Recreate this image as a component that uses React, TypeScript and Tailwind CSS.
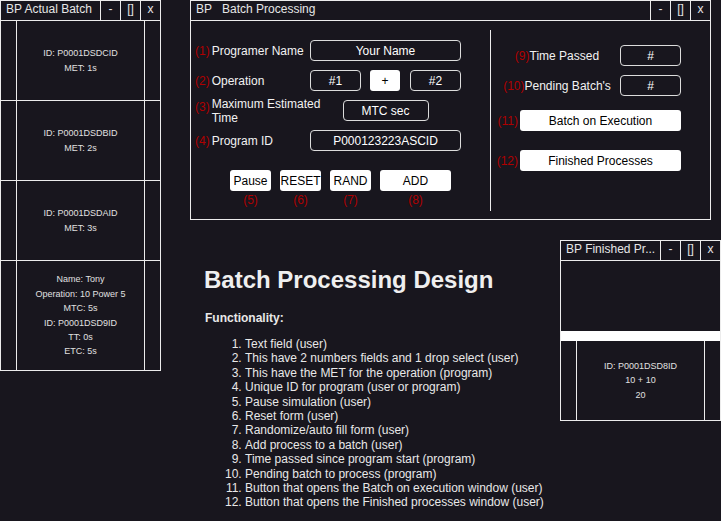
import React from "react";

function TitleBar({ children }: { children: React.ReactNode }) {
  return (
    <div className="flex h-[20px] shrink-0 border-b border-[#ececec] text-[12px] leading-[17px] text-[#e6e6e6]">
      <div className="min-w-0 flex-1 overflow-hidden text-ellipsis whitespace-nowrap pl-[5px] pr-[2px]">
        {children}
      </div>
      <div className="w-[20px] shrink-0 border-l border-[#ececec] text-center">-</div>
      <div className="w-[20px] shrink-0 border-l border-[#ececec] text-center">[]</div>
      <div className="w-[20px] shrink-0 border-l border-[#ececec] text-center">x</div>
    </div>
  );
}

function ItemRow({ lines, className }: { lines: string[]; className: string }) {
  return (
    <div className={"flex border-[#ececec] " + className}>
      <div className="w-[16px] shrink-0 border-r border-[#ececec]" />
      <div className="flex flex-1 flex-col items-center justify-center text-[9px] leading-[14.4px] text-[#e0e0e0]">
        {lines.map((l) => (
          <div key={l}>{l}</div>
        ))}
      </div>
      <div className="w-[16px] shrink-0 border-l border-[#ececec]" />
    </div>
  );
}

function Num({ n }: { n: string }) {
  return <span className="text-[#b00000]">({n})</span>;
}

function Box({ w, children }: { w: string; children: React.ReactNode }) {
  return (
    <div
      className={
        "flex h-[21px] items-center justify-center rounded-[4px] border border-[#dcdcdc] text-[12px] text-white " + w
      }
    >
      {children}
    </div>
  );
}

export default function App() {
  return (
    <div className="relative h-[521px] w-[721px] overflow-hidden bg-[#18161e] font-['Liberation_Sans',Arial,sans-serif]">
      {/* Documentation text */}
      <div className="pl-[205px] pt-[266px] text-[#e8e8e8]">
        <h1 className="ml-[-1px] text-[24px] font-bold leading-[28px] text-[#efefef]">Batch Processing Design</h1>
        <p className="mt-[17px] text-[12px] font-bold leading-[14px]">Functionality:</p>
        <ol className="mt-[12px] list-decimal pl-[40px] text-[12px] leading-[14.4px]">
          <li>Text field (user)</li>
          <li>This have 2 numbers fields and 1 drop select (user)</li>
          <li>This have the MET for the operation (program)</li>
          <li>Unique ID for program (user or program)</li>
          <li>Pause simulation (user)</li>
          <li>Reset form (user)</li>
          <li>Randomize/auto fill form (user)</li>
          <li>Add process to a batch (user)</li>
          <li>Time passed since program start (program)</li>
          <li>Pending batch to process (program)</li>
          <li>Button that opens the Batch on execution window (user)</li>
          <li>Button that opens the Finished processes window (user)</li>
        </ol>
      </div>

      {/* BP Actual Batch window */}
      <div className="absolute left-0 top-0 flex h-[371px] w-[161px] flex-col border border-[#ececec] bg-[#18161e]">
        <TitleBar>BP Actual Batch</TitleBar>
        <ItemRow className="h-[80px] border-b" lines={["ID: P0001DSDCID", "MET: 1s"]} />
        <ItemRow className="h-[80px] border-b" lines={["ID: P0001DSDBID", "MET: 2s"]} />
        <ItemRow className="h-[80px] border-b" lines={["ID: P0001DSDAID", "MET: 3s"]} />
        <ItemRow
          className="flex-1"
          lines={["Name: Tony", "Operation: 10 Power 5", "MTC: 5s", "ID: P0001DSD9ID", "TT: 0s", "ETC: 5s"]}
        />
      </div>

      {/* BP Batch Processing window */}
      <div className="absolute left-[190px] top-0 flex h-[220px] w-[521px] flex-col border border-[#ececec] bg-[#18161e]">
        <TitleBar>
          BP<span className="ml-[10px]">Batch Processing</span>
        </TitleBar>
        <div className="flex flex-1">
          <div className="w-[299px] shrink-0 pl-[4px] pt-[19px] text-[12px] text-[#f2f2f2]">
            <div className="flex h-[21px] items-center">
              <div className="w-[115px] whitespace-nowrap">
                <Num n="1" />
                <span className="ml-[2px]">Programer Name</span>
              </div>
              <Box w="w-[151px]">Your Name</Box>
            </div>
            <div className="mt-[9px] flex h-[21px] items-center">
              <div className="w-[115px] whitespace-nowrap">
                <Num n="2" />
                <span className="ml-[2px]">Operation</span>
              </div>
              <Box w="w-[51px]">#1</Box>
              <div className="ml-[9px] flex h-[21px] w-[30px] items-center justify-center rounded-[3px] bg-white text-[12px] text-black">
                +
              </div>
              <div className="ml-[10px]">
                <Box w="w-[51px]">#2</Box>
              </div>
            </div>
            <div className="mt-[9px] flex h-[21px] items-center">
              <div className="flex w-[115px] items-start whitespace-nowrap">
                <span className="mt-[3px] leading-[14px]">
                  <Num n="3" />
                </span>
                <div className="ml-[2px] leading-[14px]">
                  Maximum Estimated
                  <br />
                  Time
                </div>
              </div>
              <div className="flex w-[151px] justify-center">
                <Box w="w-[86px]">MTC sec</Box>
              </div>
            </div>
            <div className="mt-[9px] flex h-[21px] items-center">
              <div className="w-[115px] whitespace-nowrap">
                <Num n="4" />
                <span className="ml-[2px]">Program ID</span>
              </div>
              <Box w="w-[151px]">P000123223ASCID</Box>
            </div>
            <div className="mt-[19px] flex gap-[9px] pl-[35px]">
              <div className="flex h-[21px] w-[41px] items-center justify-center rounded-[3px] bg-white text-black">Pause</div>
              <div className="flex h-[21px] w-[41px] items-center justify-center rounded-[3px] bg-white text-black">RESET</div>
              <div className="flex h-[21px] w-[41px] items-center justify-center rounded-[3px] bg-white text-black">RAND</div>
              <div className="flex h-[21px] w-[71px] items-center justify-center rounded-[3px] bg-white text-black">ADD</div>
            </div>
            <div className="mt-[2px] flex gap-[9px] pl-[35px] leading-[14px] text-[#b00000]">
              <div className="w-[41px] text-center">(5)</div>
              <div className="w-[41px] text-center">(6)</div>
              <div className="w-[41px] text-center">(7)</div>
              <div className="w-[71px] text-center">(8)</div>
            </div>
          </div>
          <div className="mb-[8px] mt-[9px] flex-1 border-l border-[#ececec] pt-[15px] text-[12px] text-[#f2f2f2]">
            <div className="flex h-[21px] items-center">
              <div className="w-[129px] whitespace-nowrap pl-[3px] text-center">
                <Num n="9" />
                Time Passed
              </div>
              <Box w="w-[61px]">#</Box>
            </div>
            <div className="mt-[9px] flex h-[21px] items-center">
              <div className="w-[129px] whitespace-nowrap pl-[3px] text-center">
                <Num n="10" />
                Pending Batch's
              </div>
              <Box w="w-[61px]">#</Box>
            </div>
            <div className="mt-[14px] flex h-[21px] items-center">
              <div className="w-[29px] pr-[2px] text-right">
                <Num n="11" />
              </div>
              <div className="flex h-[21px] w-[161px] items-center justify-center rounded-[3px] bg-white text-black">
                Batch on Execution
              </div>
            </div>
            <div className="mt-[19px] flex h-[21px] items-center">
              <div className="w-[29px] pr-[2px] text-right">
                <Num n="12" />
              </div>
              <div className="flex h-[21px] w-[161px] items-center justify-center rounded-[3px] bg-white text-black">
                Finished Processes
              </div>
            </div>
          </div>
        </div>
      </div>

      {/* BP Finished Processes window */}
      <div className="absolute left-[560px] top-[240px] flex h-[181px] w-[161px] flex-col border border-[#ececec] bg-[#18161e]">
        <TitleBar>BP Finished Pr...</TitleBar>
        <div className="h-[70px] shrink-0" />
        <div className="h-[10px] shrink-0 bg-white" />
        <ItemRow className="flex-1" lines={["ID: P0001DSD8ID", "10 + 10", "20"]} />
      </div>
    </div>
  );
}
